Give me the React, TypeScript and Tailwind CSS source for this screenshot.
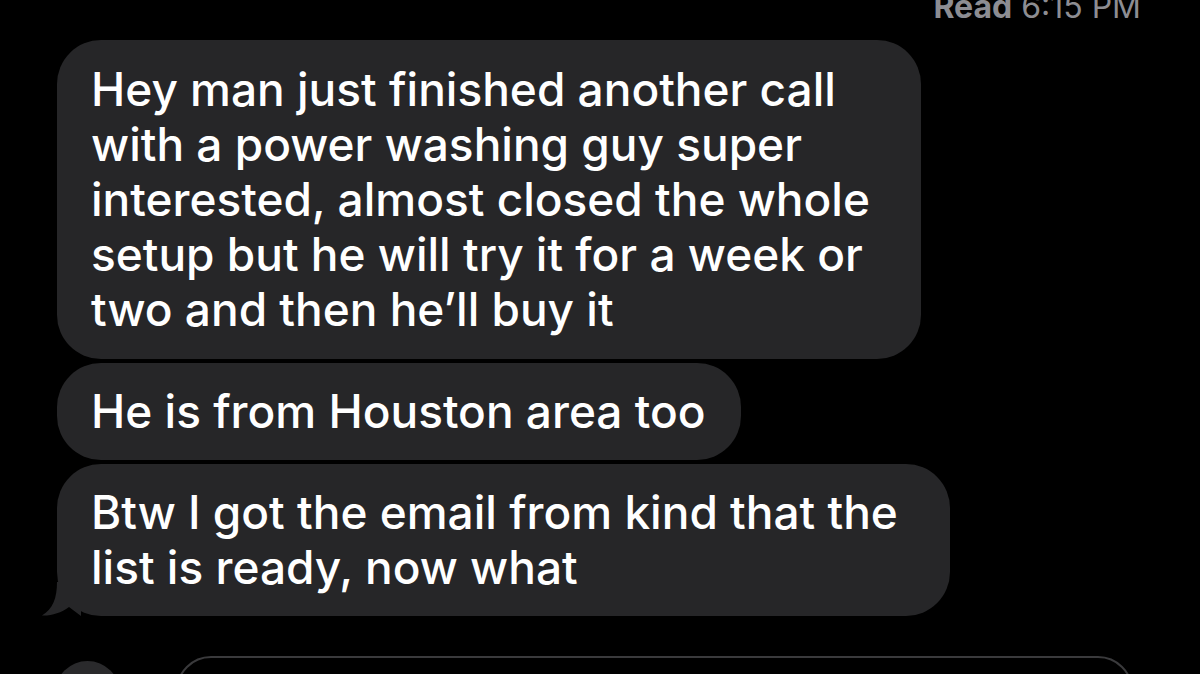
import * as React from 'react';

const Bubble: React.FC<{ width: string; py: string; tail?: boolean; lines: string[] }> = ({ width, py, tail, lines }) => {
  return (
    <div className={`relative ${width} ${py} pl-[34px] pr-[20px] bg-[#262628] rounded-[44px]`}>
      {lines.map((l, i) => (
        <div key={i} className="whitespace-nowrap">
          {l}
        </div>
      ))}
      {tail && (
        <svg
          className="absolute left-[-16px] bottom-0"
          width="40"
          height="34"
          viewBox="0 0 40 34"
          fill="#262628"
        >
          <path d="M16 0 C16 16 12 27 1 33.5 C10 34 20 31 28 25 L40 34 L40 0 Z" />
        </svg>
      )}
    </div>
  );
};

export default function App() {
  return (
    <div
      className="w-[1200px] h-[674px] overflow-hidden bg-black text-white"
      style={{ fontFamily: 'Inter, "Noto Sans", sans-serif' }}
    >
      <div className="h-[40px] flex justify-end pr-[59px]">
        <div className="-mt-[11px] text-[32px] leading-[36px] text-[#8d8d92]">
          <span className="font-bold">Read</span> 6:15 PM
        </div>
      </div>

      <div className="flex flex-col gap-[4px] pl-[57px] text-[46px] leading-[55px] font-medium">
        <Bubble
          width="w-[864px]"
          py="py-[22px]"
          lines={[
            'Hey man just finished another call',
            'with a power washing guy super',
            'interested, almost closed the whole',
            'setup but he will try it for a week or',
            'two and then he\u2019ll buy it',
          ]}
        />
        <Bubble width="w-[684px]" py="py-[21px]" lines={['He is from Houston area too']} />
        <Bubble
          width="w-[893px]"
          py="py-[21px]"
          tail
          lines={['Btw I got the email from kind that the', 'list is ready, now what']}
        />
      </div>

      <div className="mt-[40px] flex items-start pl-[55px] pr-[67px] gap-[56px]">
        <div className="mt-[5px] w-[65px] h-[65px] shrink-0 rounded-full bg-[#2a2a2c]" />
        <div className="flex-1 h-[70px] rounded-[38px] border-2 border-[#3a3a3c]" />
      </div>
    </div>
  );
}
